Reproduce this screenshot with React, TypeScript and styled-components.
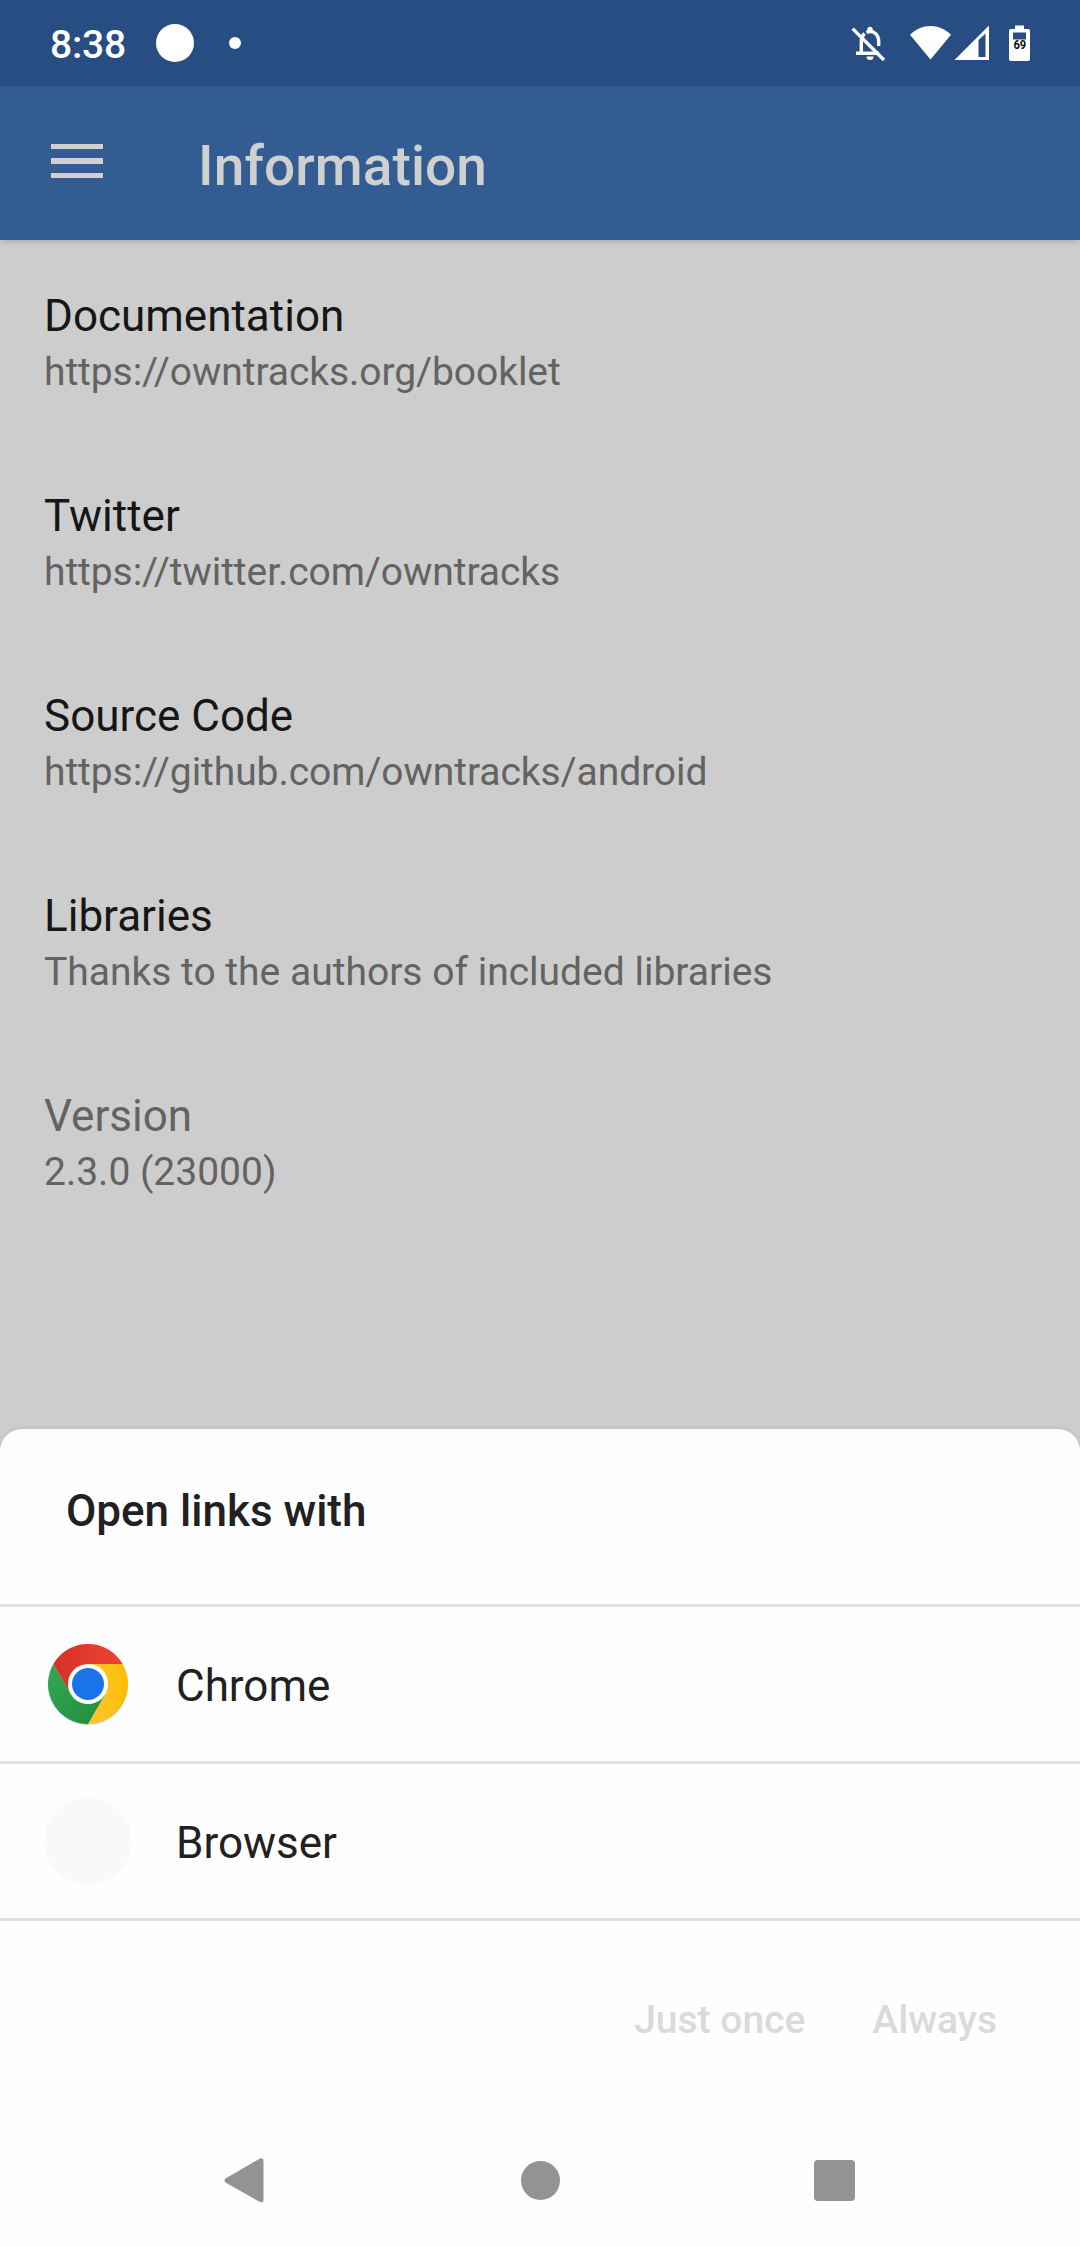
import React from "react";
import styled, { createGlobalStyle } from "styled-components";

const GlobalStyle = createGlobalStyle`
  * { box-sizing: border-box; }
  body { margin: 0; background: #cdcdcd; font-family: Roboto, sans-serif; }
`;

const Screen = styled.div`
  width: 1080px;
  height: 2246px;
  display: flex;
  flex-direction: column;
  overflow: hidden;
  background: #cdcdcd;
`;

const StatusBar = styled.header`
  height: 86px;
  flex: none;
  display: flex;
  align-items: center;
  justify-content: space-between;
  padding: 0 40px 0 50px;
  background: #284d82;
  color: #fff;
`;

const StatusGroup = styled.div`
  display: flex;
  align-items: center;
`;

const Clock = styled.span`
  width: 106px;
  padding-top: 3px;
  font-size: 39px;
  line-height: 48px;
  font-weight: 500;
  letter-spacing: -0.2px;
`;

const Dot = styled.span<{ $size: number; $gap?: number }>`
  width: ${(p) => p.$size}px;
  height: ${(p) => p.$size}px;
  margin-left: ${(p) => p.$gap ?? 0}px;
  border-radius: 50%;
  background: #fff;
`;

const StatusIcons = styled.svg`
  display: block;
  width: 190px;
  height: 86px;
`;

const AppBar = styled.div`
  height: 154px;
  flex: none;
  display: flex;
  align-items: center;
  padding: 0 51px;
  background: #335c93;
  color: #d0d0d0;
  box-shadow: 0 4px 5px -2px rgba(0, 0, 0, 0.16);
`;

const Menu = styled.div`
  width: 52px;
  display: flex;
  flex-direction: column;
  gap: 9px;
  margin-top: -4px;
`;

const MenuLine = styled.span`
  height: 5.5px;
  background: #d0d0d0;
`;

const Title = styled.h1`
  margin: 5px 0 0 95px;
  font-size: 55px;
  line-height: 64px;
  font-weight: 500;
  letter-spacing: 0.1px;
`;

const List = styled.main`
  flex: 1;
  padding-top: 25px;
`;

const Item = styled.section`
  height: 200px;
  padding: 24px 44px 0;
`;

const ItemTitle = styled.div<{ $muted?: boolean }>`
  font-size: 44px;
  line-height: 54px;
  color: ${(p) => (p.$muted ? "#636363" : "#161616")};
`;

const ItemSummary = styled.div<{ $link: boolean }>`
  padding-top: 2px;
  font-size: 39px;
  line-height: 54px;
  letter-spacing: ${(p) => (p.$link ? "-0.07px" : "normal")};
  color: #636363;
`;

const Sheet = styled.div`
  height: 817px;
  flex: none;
  display: flex;
  flex-direction: column;
  background: #fefefe;
  border-radius: 22px 22px 0 0;
  box-shadow: 0 0 5px rgba(0, 0, 0, 0.1);
  color: #212121;
`;

const SheetTitle = styled.h2`
  height: 178px;
  margin: 0;
  padding: 56px 66px 0;
  border-bottom: 3px solid #e0e0e0;
  font-size: 44px;
  line-height: 52px;
  font-weight: 500;
`;

const Target = styled.div`
  height: 157px;
  display: flex;
  align-items: center;
  padding: 0 44px;
  gap: 44px;
  border-bottom: 3px solid #e0e0e0;
  font-size: 44px;
  line-height: 52px;
`;

const TargetIcon = styled.svg`
  display: block;
  width: 88px;
  height: 88px;
`;

const TargetLabel = styled.span`
  padding-top: 4px;
`;

const Actions = styled.div`
  flex: 1;
  display: flex;
  justify-content: flex-end;
  padding: 76px 83px 0 0;
  gap: 67px;
`;

const Action = styled.span`
  font-size: 39px;
  line-height: 46px;
  font-weight: 500;
  color: #dadada;
`;

const NavBar = styled.nav`
  height: 132px;
  flex: none;
  display: flex;
  align-items: center;
  justify-content: space-between;
  padding: 0 223px;
`;

const NavIcon = styled.svg`
  display: block;
  width: 44px;
  height: 48px;
  fill: #939393;
`;

const items = [
  { title: "Documentation", summary: "https://owntracks.org/booklet", link: true },
  { title: "Twitter", summary: "https://twitter.com/owntracks", link: true },
  { title: "Source Code", summary: "https://github.com/owntracks/android", link: true },
  { title: "Libraries", summary: "Thanks to the authors of included libraries", link: false },
  { title: "Version", summary: "2.3.0 (23000)", link: false, muted: true },
];

function SystemIcons() {
  return (
    <StatusIcons viewBox="850 0 190 86" fill="#fff">
      <g fill="none" stroke="#fff" strokeWidth="3.4">
        <path d="M856 53.2H879M861.3 53V41.5C861.3 38 862.5 35.5 864.5 33.5M866.5 32.3C874 29.5 878.7 35 878.7 41.5V46" />
        <path d="M852.6 28.6L884 60" />
      </g>
      <path d="M867.3 31.5V29.5a2.7 2.7 0 0 1 5.4 0V31.5zM866.5 56.5h7a3.5 3.5 0 0 1-7 0z" />
      <path d="M910 34.8C921.5 23 939.5 23 951 34.8L930.5 59.5z" />
      <path fillRule="evenodd" d="M954.5 60L989 25.5V60zM978.5 40V57H985.5V33.5z" />
      <path fillRule="evenodd" d="M1015 25.5h9v3.5h4a2 2 0 0 1 2 2v28a2 2 0 0 1-2 2h-17a2 2 0 0 1-2-2v-28a2 2 0 0 1 2-2h4zM1013 32.5v7h13v-7z" />
      <text x="1013.4" y="49.2" fill="#111" fontFamily="Roboto" fontSize="13" fontWeight="700" textLength="12.8" lengthAdjust="spacingAndGlyphs">69</text>
    </StatusIcons>
  );
}

function ChromeIcon() {
  return (
    <TargetIcon viewBox="-44 -44 88 88">
      <defs>
        <linearGradient id="red" x1="0" x2="1"><stop offset="0" stopColor="#d93025" /><stop offset="1" stopColor="#ea4335" /></linearGradient>
        <linearGradient id="yellow" x1="0" x2="1"><stop offset="0" stopColor="#fcc934" /><stop offset="1" stopColor="#fbbc04" /></linearGradient>
        <linearGradient id="green" x1="1" x2="0" y1="1" y2="0"><stop offset="0" stopColor="#1e8e3e" /><stop offset="1" stopColor="#34a853" /></linearGradient>
      </defs>
      <circle cy="1" r="40" fill="#d5d5d5" />
      <path d="M-34.64-20A40 40 0 0 1 34.64-20H0L-17.32 10z" fill="url(#red)" />
      <path d="M34.64-20A40 40 0 0 1 0 40L17.32 10L0-20z" fill="url(#yellow)" />
      <path d="M0 40A40 40 0 0 1-34.64-20L-17.32 10H17.32z" fill="url(#green)" />
      <circle r="20" fill="#fff" />
      <circle r="16" fill="#1a73e8" />
    </TargetIcon>
  );
}

export default function App() {
  return (
    <>
      <GlobalStyle />
      <Screen>
        <StatusBar>
          <StatusGroup>
            <Clock>8:38</Clock>
            <Dot $size={38} />
            <Dot $size={12} $gap={35} />
          </StatusGroup>
          <SystemIcons />
        </StatusBar>
        <AppBar>
          <Menu>
            <MenuLine />
            <MenuLine />
            <MenuLine />
          </Menu>
          <Title>Information</Title>
        </AppBar>
        <List>
          {items.map((item) => (
            <Item key={item.title}>
              <ItemTitle $muted={item.muted}>{item.title}</ItemTitle>
              <ItemSummary $link={item.link}>{item.summary}</ItemSummary>
            </Item>
          ))}
        </List>
        <Sheet>
          <SheetTitle>Open links with</SheetTitle>
          <Target>
            <ChromeIcon />
            <TargetLabel>Chrome</TargetLabel>
          </Target>
          <Target>
            <TargetIcon viewBox="0 0 88 88">
              <circle cx="44" cy="44" r="43.5" fill="#f9f9f9" />
            </TargetIcon>
            <TargetLabel>Browser</TargetLabel>
          </Target>
          <Actions>
            <Action>Just once</Action>
            <Action>Always</Action>
          </Actions>
          <NavBar>
            <NavIcon viewBox="0 0 44 48">
              <path d="M2.5 22.5L36.5 2.7Q40.5 1 40.5 5V43.500Q40.5 47.500 36.500 45.800L2.5 26.5Q.5 24.500 2.5 22.5z" />
            </NavIcon>
            <NavIcon viewBox="0 0 44 48">
              <circle cx="22.5" cy="24.5" r="19.5" />
            </NavIcon>
            <NavIcon viewBox="0 0 44 48">
              <rect x="1" y="4" width="41" height="41" rx="4" />
            </NavIcon>
          </NavBar>
        </Sheet>
      </Screen>
    </>
  );
}
